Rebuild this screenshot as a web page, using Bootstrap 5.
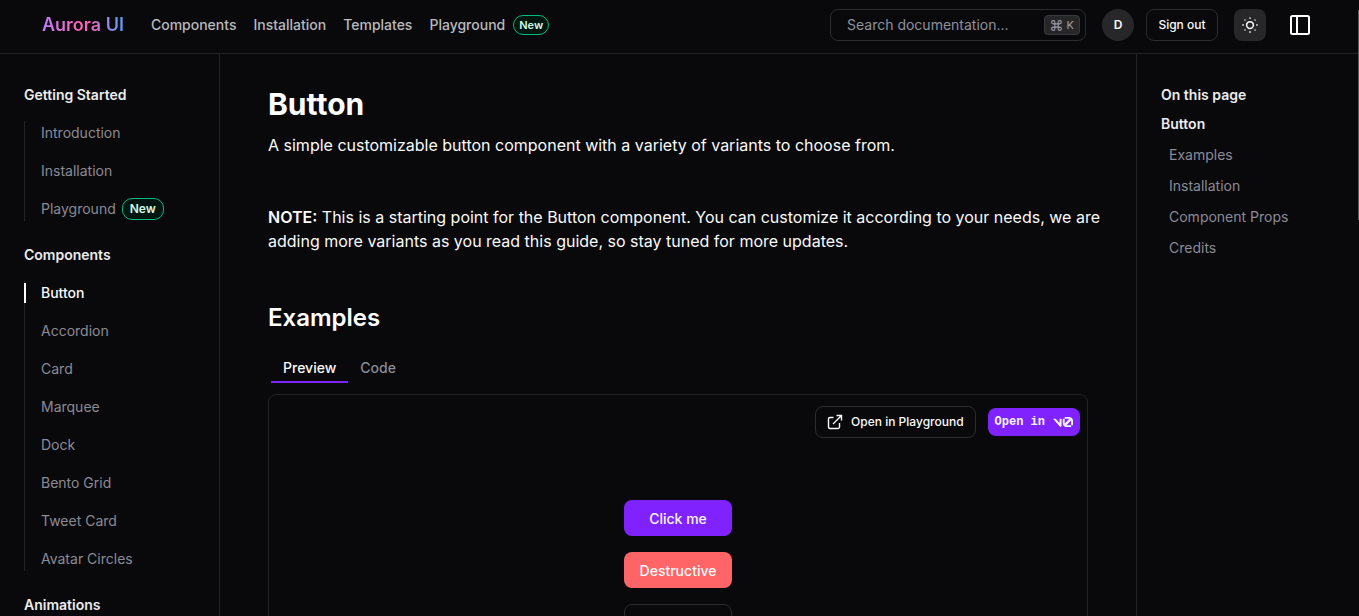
<!DOCTYPE html>
<html lang="en" data-bs-theme="dark">
<head>
<meta charset="utf-8">
<meta name="viewport" content="width=device-width, initial-scale=1">
<title>Button – Aurora UI</title>
<link href="https://cdn.jsdelivr.net/npm/bootstrap@5.3.0/dist/css/bootstrap.min.css" rel="stylesheet">
<style>
:root{--line:#232326;--muted:#8b8b95;--violet:#7f22fe;--green:#00bc7d}
body{background:#09090b;color:#fafafa;font-family:Inter,"Liberation Sans",sans-serif;font-size:16px;line-height:24px}
a{text-decoration:none}
.shell{height:100vh}
.topbar{height:54px;padding:0 49px 3px 42px;border-bottom:1px solid var(--line)}
.brand{font-size:18px;font-weight:600;background:linear-gradient(90deg,#c27aff 0%,#fb64b6 45%,#fb64b6 55%,#51a2ff 100%);-webkit-background-clip:text;background-clip:text;color:transparent;margin-right:27px}
.topnav{gap:17px}
.topnav a{font-size:14px;font-weight:500;color:#b9b9be}
.pill{border:1px solid var(--green);background:#03150f;color:#d0fae5;font-weight:600;border-radius:10px}
.pill-sm{font-size:11px;line-height:18px;padding:0 5px}
.pill-md{font-size:12px;line-height:20px;padding:0 7px}
.search{width:256px;height:32px;border:1px solid #2c2c2f;border-radius:8px;padding:0 5px 0 16px}
.search input{background:none;border:0;outline:0;min-width:0;color:#9f9fa9;font-size:14px;padding:0}
.search input::placeholder{color:#90909c;opacity:1}
.search kbd{background:#27272a;border:1px solid #3a3a3e;color:#9f9fa9;border-radius:4px;height:20px;padding:0 5px;font-size:11px;font-family:inherit}
.avatar{width:32px;height:32px;background:#27272a;font-size:12px;font-weight:600}
.btn-line{border:1px solid #2c2c2f;border-radius:8px;color:#fafafa;font-weight:500;font-size:12px;height:32px;padding:0 11px}
.btn-signout{width:72px}
.btn-tile{width:32px;height:32px;padding:0;background:#27272a;border-radius:8px;color:#fafafa}
.side{width:220px;border-right:1px solid var(--line);padding:29px 24px 0}
.toc{width:223px;border-left:1px solid var(--line);padding:29px 24px 0}
.side h2,.toc h2{font-size:14px;line-height:24px;font-weight:600;margin:0;color:#ececee}
.side ul{border-left:1px solid var(--line);margin:14px 0 22px;padding:0 0 0 16px;gap:14px}
.side a,.toc a{color:var(--muted)}
.side li,.toc li{height:24px;font-size:14px}
.side .with-pill{gap:6px}
.side .current{position:relative;color:#fafafa;font-weight:500}
.side .current::before{content:"";position:absolute;left:-17px;top:-1px;width:2px;height:20px;background:#fff}
.toc .toc-title{margin-bottom:5px}
.toc ul{gap:7px;margin:7px 0 0;padding:0 0 0 8px}
.doc{padding:32px 32px 0 48px}
.doc h1{font-size:30px;line-height:36px;font-weight:700;margin:0 0 11px}
.doc p{margin:0 0 48px}
.doc h2{font-size:24px;line-height:34px;font-weight:600;margin:0 0 21px}
.tabs{margin-left:3px}
.tabs button{border:0;border-bottom:2px solid transparent;background:none;font-size:14px;font-weight:500;line-height:24px;padding:0 12px 4px;color:#8b8b99;height:27px}
.tabs button.active{color:#fafafa;border-color:var(--violet)}
.preview{border:1px solid var(--line);border-radius:8px;margin-top:11px;min-height:400px;padding:11px 7px}
.btn-violet,.btn-violet:hover{background:var(--violet);color:#f5f3ff}
.btn-v0{height:28px;border-radius:8px;padding:0 6px;font:700 12px "Liberation Mono",monospace}
.samples{margin-top:62px}
.sample{width:108px;height:36px;border-radius:8px;font-size:14px;font-weight:500;padding:0}
.btn-coral,.btn-coral:hover{background:#ff6467;color:#fafafa}
.thumb{position:fixed;right:0;top:10px;width:1px;height:210px;background:#5a5a5c}
</style>
</head>
<body>
<div class="shell d-flex flex-column overflow-hidden">
<header class="topbar d-flex align-items-center flex-shrink-0">
  <a href="#" class="brand">Aurora UI</a>
  <nav class="topnav d-flex align-items-center me-auto">
    <a href="#">Components</a><a href="#">Installation</a><a href="#">Templates</a>
    <a href="#" class="d-flex align-items-center gap-2">Playground <span class="pill pill-sm">New</span></a>
  </nav>
  <label class="search d-flex align-items-center me-3">
    <input class="flex-grow-1" type="text" placeholder="Search documentation..." aria-label="Search documentation">
    <kbd class="d-flex align-items-center gap-1"><svg width="13" height="13" viewBox="0 0 24 24" fill="none" stroke="currentColor" stroke-width="2"><path d="M15 6v12a3 3 0 1 0 3-3H6a3 3 0 1 0 3 3V6a3 3 0 1 0-3 3h12a3 3 0 1 0-3-3"/></svg>K</kbd>
  </label>
  <span class="avatar rounded-circle d-flex align-items-center justify-content-center me-2">D</span>
  <button class="btn btn-line btn-signout px-0 ms-1 me-3">Sign out</button>
  <button class="btn btn-tile d-flex align-items-center justify-content-center me-3" aria-label="Toggle theme"><svg width="18" height="18" viewBox="0 0 24 24" fill="none" stroke="currentColor" stroke-width="2" stroke-linecap="round"><circle cx="12" cy="12" r="4.500"/><path d="M12 2.500v.5M12 21v.5M2.500 12h.5M21 12h.5M5.300 5.300h.01M18.700 5.300h.01M5.300 18.700h.01M18.700 18.700h.01"/></svg></button>
  <button class="btn p-0 border-0 d-flex ms-2 text-white" aria-label="Toggle sidebar"><svg width="20" height="20" viewBox="0 0 20 20" fill="none" stroke="currentColor" stroke-width="2"><rect x="1" y="1" width="18" height="18" rx="1.500"/><path d="M7 1v18"/></svg></button>
</header>
<div class="d-flex flex-grow-1 overflow-hidden">
  <nav class="side flex-shrink-0" aria-label="Docs">
    <h2>Getting Started</h2>
    <ul class="list-unstyled d-flex flex-column">
      <li><a href="#">Introduction</a></li>
      <li><a href="#">Installation</a></li>
      <li class="with-pill d-flex align-items-center"><a href="#">Playground</a><span class="pill pill-md">New</span></li>
    </ul>
    <h2>Components</h2>
    <ul class="list-unstyled d-flex flex-column">
      <li><a href="#" class="current">Button</a></li>
      <li><a href="#">Accordion</a></li>
      <li><a href="#">Card</a></li>
      <li><a href="#">Marquee</a></li>
      <li><a href="#">Dock</a></li>
      <li><a href="#">Bento Grid</a></li>
      <li><a href="#">Tweet Card</a></li>
      <li><a href="#">Avatar Circles</a></li>
    </ul>
    <h2>Animations</h2>
  </nav>
  <main class="doc flex-grow-1">
    <h1>Button</h1>
    <p>A simple customizable button component with a variety of variants to choose from.</p>
    <p><b class="fw-semibold">NOTE:</b> This is a starting point for the Button component. You can customize it according to your needs, we are adding more variants as you read this guide, so stay tuned for more updates.</p>
    <h2>Examples</h2>
    <div class="tabs d-flex" role="tablist">
      <button class="active" role="tab" aria-selected="true">Preview</button><button role="tab" aria-selected="false">Code</button>
    </div>
    <section class="preview me-3">
      <div class="d-flex justify-content-end align-items-center gap-2">
        <button class="btn btn-line d-flex align-items-center gap-2 me-1"><svg width="16" height="16" viewBox="0 0 16 16" fill="none" stroke="currentColor" stroke-width="1.400"><path d="M6.500 3.500H3a1.500 1.500 0 0 0-1.500 1.500V13A1.500 1.500 0 0 0 3 14.500h8a1.500 1.500 0 0 0 1.500-1.500V9M6 10l8.500-8.500M9.500 1.500h5v5"/></svg>Open in Playground</button>
        <button class="btn btn-violet btn-v0 d-flex align-items-center gap-2">Open in <svg width="20" height="20" viewBox="0 0 40 20" fill="currentColor" aria-label="v0"><path d="M23.392 0H32.619C36.745 0 40.091 3.346 40.091 7.472V16.339H36.254V7.472L36.240 7.118L27.005 16.338H36.254V20H27.045C22.918 20 19.539 16.647 19.539 12.521V3.559H23.376V12.521L23.400 12.920L32.700 3.662H23.376V0ZM13.766 19.012L0 3.559H5.466L13.045 12.162V3.559H17.168V17.742C17.168 19.882 15.189 20.612 13.766 19.012Z"/></svg></button>
      </div>
      <div class="samples d-flex flex-column align-items-center gap-3">
        <button class="btn btn-violet sample">Click me</button>
        <button class="btn btn-coral sample">Destructive</button>
        <button class="btn btn-line sample" aria-label="Outline"></button>
      </div>
    </section>
  </main>
  <aside class="toc flex-shrink-0">
    <h2 class="toc-title">On this page</h2>
    <h2>Button</h2>
    <ul class="list-unstyled d-flex flex-column">
      <li><a href="#">Examples</a></li><li><a href="#">Installation</a></li><li><a href="#">Component Props</a></li><li><a href="#">Credits</a></li>
    </ul>
  </aside>
</div>
</div>
<div class="thumb"></div>
<script src="https://cdn.jsdelivr.net/npm/bootstrap@5.3.0/dist/js/bootstrap.bundle.min.js"></script>
</body>
</html>
